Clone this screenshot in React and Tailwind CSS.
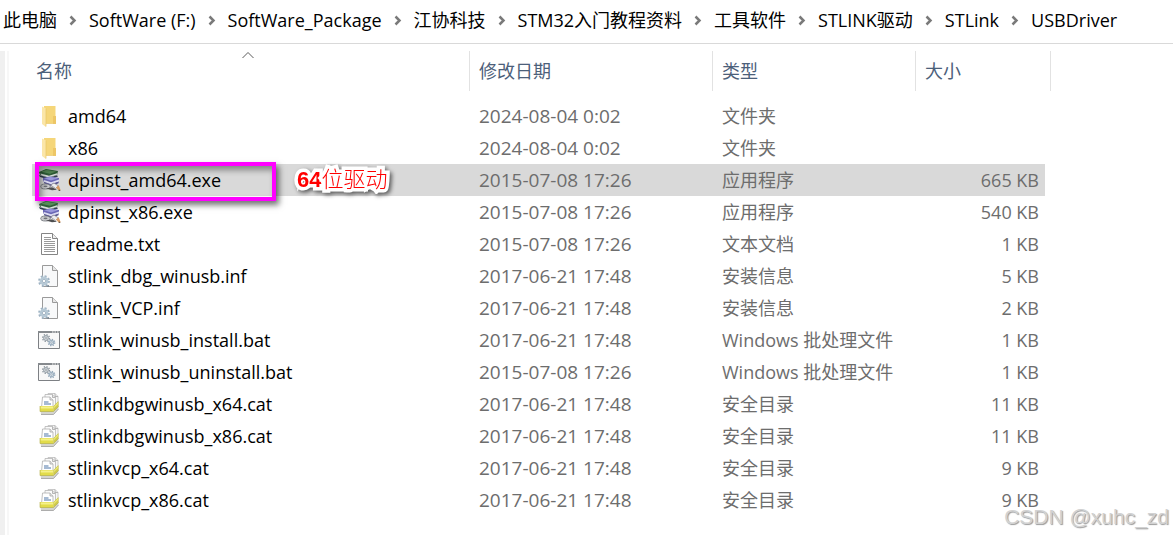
import { Fragment } from 'react';

const path = [
  '此电脑',
  'SoftWare (F:)',
  'SoftWare_Package',
  '江协科技',
  'STM32入门教程资料',
  '工具软件',
  'STLINK驱动',
  'STLink',
  'USBDriver',
];

const files = [
  { icon: FolderIcon, name: 'amd64', date: '2024-08-04 0:02', type: '文件夹', size: '' },
  { icon: FolderIcon, name: 'x86', date: '2024-08-04 0:02', type: '文件夹', size: '' },
  { icon: InstallerIcon, name: 'dpinst_amd64.exe', date: '2015-07-08 17:26', type: '应用程序', size: '665 KB', selected: true, note: '64位驱动' },
  { icon: InstallerIcon, name: 'dpinst_x86.exe', date: '2015-07-08 17:26', type: '应用程序', size: '540 KB' },
  { icon: TextIcon, name: 'readme.txt', date: '2015-07-08 17:26', type: '文本文档', size: '1 KB' },
  { icon: SetupIcon, name: 'stlink_dbg_winusb.inf', date: '2017-06-21 17:48', type: '安装信息', size: '5 KB' },
  { icon: SetupIcon, name: 'stlink_VCP.inf', date: '2017-06-21 17:48', type: '安装信息', size: '2 KB' },
  { icon: BatchIcon, name: 'stlink_winusb_install.bat', date: '2017-06-21 17:48', type: 'Windows 批处理文件', size: '1 KB' },
  { icon: BatchIcon, name: 'stlink_winusb_uninstall.bat', date: '2015-07-08 17:26', type: 'Windows 批处理文件', size: '1 KB' },
  { icon: CatalogIcon, name: 'stlinkdbgwinusb_x64.cat', date: '2017-06-21 17:48', type: '安全目录', size: '11 KB' },
  { icon: CatalogIcon, name: 'stlinkdbgwinusb_x86.cat', date: '2017-06-21 17:48', type: '安全目录', size: '11 KB' },
  { icon: CatalogIcon, name: 'stlinkvcp_x64.cat', date: '2017-06-21 17:48', type: '安全目录', size: '9 KB' },
  { icon: CatalogIcon, name: 'stlinkvcp_x86.cat', date: '2017-06-21 17:48', type: '安全目录', size: '9 KB' },
];

function FolderIcon() {
  return (
    <svg className="size-6 shrink-0" viewBox="0 0 24 24" aria-hidden="true">
      <path d="M6 2h11.500v17H6z" fill="#f5d679" />
      <path d="M15 12h3v8h-3z" fill="#edc666" />
      <path d="M4 2.500l4 2v18.500l-4-3z" fill="#fbe6a8" />
      <path d="M8 4.500v18" stroke="#e8c667" strokeWidth="0.7" />
      <path d="M8 19.500h10" stroke="#ecc869" strokeWidth="0.8" />
    </svg>
  );
}

function InstallerIcon() {
  return (
    <svg className="size-6 shrink-0" viewBox="0 0 24 24" aria-hidden="true">
      <path d="M1 4l7-3 12 2-1 4-8 2.500L2 7z" fill="#2f5f38" />
      <path d="M3 3.800L8.500 1.700l10 1.800-6.500 2.300z" fill="#578b58" />
      <path d="M2.500 5.500l8.500 2.300 8-2.500v1.500l-8 2.700-8-2z" fill="#d9dedb" />
      <path d="M1 7l10 2.800 8-2.500 1 1.200-9 3L2 9z" fill="#303c50" />
      <path d="M5 10l7-1.500 9 1.500v4l-8 3.500-8-4z" fill="#6a67b5" />
      <path d="M6 10.200l6.500-1.300 7.500 1.300-7 2.300z" fill="#9a98da" />
      <path d="M6 12l7 2.200 8-2.700v2l-8 3-8-3z" fill="#dddcf2" />
      <path d="M6 14l7 2.300 7.500-2.500v1.500l-7.500 3-7-3z" fill="#55518e" />
      <ellipse cx="7.500" cy="18.500" rx="4.800" ry="2.500" fill="#c9c9cd" stroke="#777a80" strokeWidth="0.900" />
      <ellipse cx="7.500" cy="18.300" rx="2" ry="0.900" fill="#6f7278" />
      <path d="M8 20.500l6-1.200 5 2.500-5 .5z" fill="#4e4e50" />
      <path d="M12.500 17l3.500-2 4.500 3-3 2.500z" fill="#ececef" stroke="#808086" strokeWidth="0.700" />
      <path d="M18 19.500l2.700-2.300 2 5-2 .3z" fill="#d99a61" />
      <path d="M21 21.500l1.700 1.200-2.200.1z" fill="#333" />
    </svg>
  );
}

function TextIcon() {
  return (
    <svg className="size-6 shrink-0" viewBox="0 0 24 24" aria-hidden="true">
      <path d="M3.500 1.500h11l5 5v16h-16z" fill="#fff" stroke="#858585" />
      <path d="M14.500 1.500v5h5" fill="#eee" stroke="#858585" />
      <path
        d="M6 5.500h7M6 7.500h7M6 9.500h11M6 11.500h11M6 13.500h11M6 15.500h11M6 17.500h11M6 19.500h11"
        stroke="#9a9a9a"
      />
    </svg>
  );
}

function SetupIcon() {
  return (
    <svg className="size-6 shrink-0" viewBox="0 0 24 24" aria-hidden="true">
      <path d="M4.500 1.500h10l5 5v16h-15z" fill="#f8f9fa" stroke="#9a9a9a" />
      <path d="M14.500 1.500v5h5" fill="#e6e6e6" stroke="#9a9a9a" />
      <circle cx="6" cy="17" r="4.800" fill="none" stroke="#9fb3c3" strokeWidth="2.200" strokeDasharray="2 1.770" />
      <circle cx="6" cy="17" r="3.300" fill="#e8f0f5" stroke="#b6c9d6" strokeWidth="2.200" />
      <circle cx="6" cy="17" r="1.800" fill="#f9fbfc" stroke="#8aa0b2" strokeWidth="0.800" />
      <path d="M8 22l3-1v2z" fill="#718291" />
    </svg>
  );
}

function BatchIcon() {
  return (
    <svg className="size-6 shrink-0" viewBox="0 0 24 24" aria-hidden="true">
      <path d="M.5 3.500h21v17H.5z" fill="#f8f8f8" stroke="#7d8084" />
      <path d="M0 3h22v2H0z" fill="#868a8e" />
      <path d="M14 4h1.500M16.500 4H18M19 4h1.500" stroke="#f2f2f2" />
      <circle cx="8" cy="10" r="3.400" fill="none" stroke="#8d969e" strokeWidth="1.300" strokeDasharray="1.300 1.370" />
      <circle cx="8" cy="10" r="2.300" fill="#e6eaed" stroke="#9da6ad" strokeWidth="1.200" />
      <circle cx="8" cy="10" r="0.800" fill="#fff" stroke="#7c868f" strokeWidth="0.600" />
      <circle cx="13.500" cy="14.500" r="3.200" fill="none" stroke="#8fa3b6" strokeWidth="1.300" strokeDasharray="1.200 1.313" />
      <circle cx="13.500" cy="14.500" r="2.200" fill="#eaf1f6" stroke="#a0b3c3" strokeWidth="1.200" />
      <circle cx="13.500" cy="14.500" r="0.800" fill="#fff" stroke="#6f8497" strokeWidth="0.600" />
    </svg>
  );
}

function CatalogIcon() {
  return (
    <svg className="size-6 shrink-0" viewBox="0 0 24 24" aria-hidden="true">
      <path d="M10 1.500h7l3 3v9H10z" fill="#f7f7f7" stroke="#bdbdbd" strokeWidth="0.800" />
      <path d="M7 2.500h7.500l3 3v9H7z" fill="#fafafa" stroke="#b5b5b5" strokeWidth="0.800" />
      <path d="M4.500 5H12l3 3v8H3.500z" fill="#fff" stroke="#aeaeae" strokeWidth="0.800" />
      <path d="M12 5v3h3M14.500 2.500v3h3M17 1.500v3h3" fill="#e6e6e6" stroke="#a6a6a6" strokeWidth="0.800" />
      <path d="M6 10h4.500M6 12h7" stroke="#4f77a8" strokeWidth="1.100" />
      <path d="M2 14.500h13.500l5-5V17l-5 5.500H3z" fill="#d4d4ce" />
      <path d="M2 14h13.500v5.500H2z" fill="#e2dc4a" />
      <path d="M2.500 14.500h13v2h-13z" fill="#f5f18a" />
      <path d="M15.500 14l5-5v5.500l-5 5z" fill="#cfca4c" />
      <path d="M16 14.500l4-4v1.500l-4 4z" fill="#efec78" />
      <path d="M2 14v5.500h13.500l5-5" fill="none" stroke="#b1ac3c" strokeWidth="0.600" />
      <path d="M3 22.500h12.500l5-5.500" fill="none" stroke="#9d9d9d" strokeWidth="0.800" />
    </svg>
  );
}

function Breadcrumb() {
  return (
    <nav className="flex h-11 items-center gap-3 border-b border-[#d9d9d9] px-[3px] pb-1 whitespace-nowrap">
      {path.map((part, i) => (
        <Fragment key={part}>
          {i > 0 && (
            <svg className="h-3 w-2 shrink-0" viewBox="0 0 8 12" aria-hidden="true">
              <path d="M1.500 2.500L5.500 6.500 1.500 10.500" fill="none" stroke="#7a7a7a" strokeWidth="2.500" />
            </svg>
          )}
          <a href="#" className="text-black">{part}</a>
        </Fragment>
      ))}
    </nav>
  );
}

function FileRow({ file }) {
  const Icon = file.icon;
  return (
    <tr className={file.selected ? 'bg-[#d9d9d9]' : ''}>
      <td className="relative h-8 border-l-[5px] border-white pl-1.5 text-lg leading-6 text-black">
        <div className="flex items-center gap-1.5">
          <Icon />
          {file.name}
        </div>
        {/* callout drawn over the recommended installer */}
        {file.note && (
          <>
            <div className="absolute -top-0.5 left-[3px] h-[39px] w-[241px] border-4 border-[#ff00ff] shadow-[3px_4px_6px_rgba(0,0,0,0.55),inset_3px_4px_6px_rgba(0,0,0,0.4)]" />
            <span className="absolute top-0 left-[265px] font-['Liberation_Sans','Noto_Sans_CJK_SC',sans-serif] text-[22px] leading-8 font-light text-[#ff0000] drop-shadow-[2px_2px_2px_rgba(0,0,0,0.6)] [paint-order:stroke_fill] [-webkit-text-stroke:7px_white]">
              <b className="font-bold">64</b>
              位驱动
            </span>
          </>
        )}
      </td>
      <td className="pl-[9px] text-[19px] leading-6">{file.date}</td>
      <td className="pl-[9px] text-lg leading-6">{file.type}</td>
      <td className="border-r-[6px] border-white pr-1.5 text-right text-lg leading-6">{file.size}</td>
    </tr>
  );
}

export default function App() {
  return (
    <div className="relative flex min-h-screen flex-col overflow-hidden bg-white font-['Open_Sans','Noto_Sans_CJK_SC',sans-serif] text-lg leading-6">
      <Breadcrumb />
      <main className="mt-[7px] flex flex-1">
        <div className="w-[5px] shrink-0 bg-[#f0f0f0]" />
        <div className="ml-0.5 w-0.5 shrink-0 bg-[#f7f7f7]" />
        <div className="pl-[18px]">
          <table className="w-[1024px] table-fixed border-separate border-spacing-0 whitespace-nowrap text-[#6d6d6d]">
            <thead className="text-left text-[#4c607a]">
              <tr>
                <th className="relative h-10 w-[443px] border-r border-[#e2e2e2] pl-[9px] font-normal">
                  名称
                  <svg className="absolute top-0 left-1/2 h-2 w-3 -translate-x-1/2" viewBox="0 0 12 8" aria-hidden="true">
                    <path d="M.5 7L6 1.500 11.500 7" fill="none" stroke="#5a5a5a" />
                  </svg>
                </th>
                <th className="w-[243px] border-r border-[#e2e2e2] pl-[9px] font-normal">修改日期</th>
                <th className="w-[203px] border-r border-[#e2e2e2] pl-[9px] font-normal">类型</th>
                <th className="border-r border-[#e2e2e2] pl-[9px] font-normal">大小</th>
              </tr>
            </thead>
            <tbody className="before:block before:h-[9px] before:content-['']">
              {files.map((file) => (
                <FileRow key={file.name} file={file} />
              ))}
            </tbody>
          </table>
        </div>
      </main>
      <div className="absolute right-1 bottom-1 font-['Liberation_Sans',sans-serif] text-[21px] leading-7 text-[#d2d2d2] [text-shadow:1px_1px_1px_#999]">
        CSDN @xuhc_zd
      </div>
    </div>
  );
}
